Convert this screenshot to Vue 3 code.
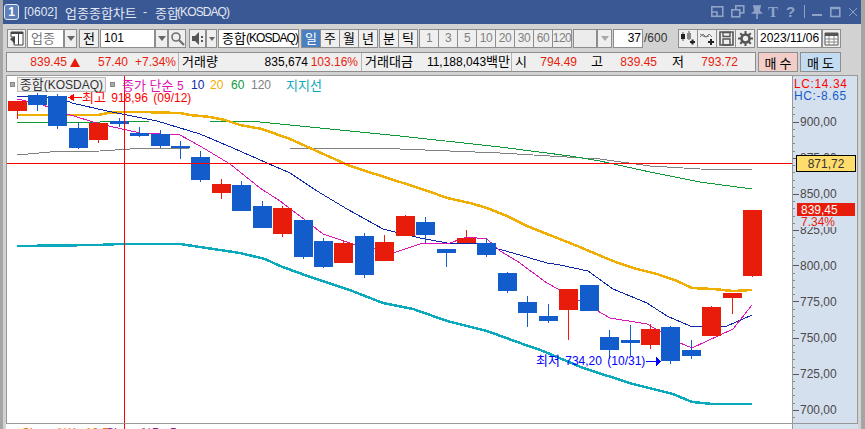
<script setup>
const periods = ['1', '3', '5', '10', '20', '30', '60', '120']
const red = '#e81c0a'
const blue = '#125ccb'
const raw = [
  [8, 100, 110, 100, 118, 1], [28, 94, 104, 92, 110, 0], [48, 95, 125, 93, 128, 0], [69, 127, 147, 122, 148, 0],
  [89, 122, 139, 122, 142, 1], [110, 120, 123, 117, 126, 0], [130, 132, 135, 126, 136, 0], [151, 133, 145, 129, 147, 0],
  [171, 145, 147, 140, 158, 0], [191, 156, 179, 150, 181, 0], [212, 183, 192, 178, 198, 1], [232, 184, 210, 180, 210, 0],
  [253, 205, 227, 200, 227, 0], [273, 207, 233, 205, 236, 1], [294, 219, 256, 219, 258, 0], [314, 240, 266, 237, 267, 0],
  [334, 242, 262, 239, 262, 1], [355, 235, 274, 232, 277, 0], [375, 241, 260, 234, 260, 1], [396, 215, 235, 214, 235, 1],
  [416, 221, 234, 216, 242, 0], [437, 248, 252, 248, 266, 0], [457, 237, 242, 229, 242, 1], [477, 242, 254, 237, 256, 0],
  [498, 272, 290, 271, 292, 0], [518, 301, 312, 295, 326, 0], [539, 315, 320, 303, 322, 0], [559, 288, 309, 288, 339, 1],
  [580, 284, 310, 284, 310, 0], [600, 336, 349, 329, 358, 0], [621, 339, 342, 324, 355, 0], [641, 328, 344, 323, 348, 1],
  [661, 326, 360, 325, 363, 0], [682, 349, 355, 339, 358, 0], [702, 306, 335, 305, 335, 1], [723, 292, 297, 292, 313, 1],
  [743, 209, 275, 209, 276, 1]
]
const candles = raw.map(([x, top, bottom, wt, wb, up]) => ({ x, top, h: bottom - top, wt, wh: wb - wt, wx: x + 9, color: up ? red : blue }))

const lines = [
  { c: '#808080', w: 1, p: '17,154 50,151 100,150 130,148 190,147 290,147 400,148 500,152 600,158 650,165 700,168 752,169' },
  { c: '#0f9a3a', w: 1, p: '17,122 28,121 100,121 150,120 210,120 250,120 290,124 400,135 500,146 570,155 600,160 650,171 700,181 752,188' },
  { c: '#f0ae00', w: 2.5, p: '17,114 98,114 108,112 122,111 140,111 180,112 190,114 210,116 225,119 240,124 262,128 290,138 350,165 428,190 447,197 470,202 487,207 507,215 527,225 547,233 570,242 613,260 633,267 657,273 677,280 692,287 713,288 733,290 752,289' },
  { c: '#0aa9bb', w: 2.5, p: '17,245 98,244 120,243 180,243 200,246 240,252 265,258 280,265 313,277 347,288 383,302 413,308 447,320 487,330 520,342 543,350 583,367 633,383 673,393 692,401 713,403 752,403' },
  { c: '#0c28a8', w: 1, p: '17,95 60,97 72,102 107,110 157,120 200,133 233,147 267,162 290,172 317,190 347,208 383,228 420,237 447,242 480,243 513,252 547,262 560,264 588,270 613,288 647,302 667,315 690,325 727,325 752,314' },
  { c: '#dc14b8', w: 1, p: '17,98 40,103 67,113 100,123 140,132 180,134 200,145 230,163 260,187 280,200 300,215 323,233 353,243 393,252 423,242 447,243 467,236 487,238 500,250 517,260 547,282 580,300 610,317 647,323 680,342 692,347 733,328 752,304' }
]

const runs = (text) => text.split(/([가-힣]+)/).filter(Boolean).map((t) => ({ t, ko: /[가-힣]/.test(t) }))

const infoCells = [
  { t: '839.45', w: 60, cls: 'r red' }, { tri: true, w: 13 }, { t: '57.40', w: 48, cls: 'r red' }, { t: '+7.34%', w: 48, cls: 'r red' },
  { t: '거래량', w: 40, m: 2, cls: 'l div' }, { t: '835,674', w: 90, cls: 'r' }, { t: '103.16%', w: 50, cls: 'r red' },
  { t: '거래대금', w: 54, m: 3, cls: 'l div' }, { t: '11,188,043백만', w: 95, cls: 'r' },
  { t: '시', w: 20, m: 1, cls: 'l div' }, { t: '794.49', w: 46, cls: 'r red' }, { t: '고', w: 26, cls: 'r' }, { t: '839.45', w: 54, cls: 'r red' },
  { t: '저', w: 27, cls: 'r' }, { t: '793.72', w: 54, cls: 'r red' }
].map((c) => ({ ...c, parts: c.t ? runs(c.t) : [] }))

const axisTop = 120.7
const step = 7.23
const ticks = []
for (let i = -5; i <= 41; i++) {
  const y = axisTop + i * step
  if (y > 104 && y < 423) ticks.push({ y: Math.round(y), major: i % 5 === 0 })
}
const labels = ['900,00', '875,00', '850,00', '825,00', '800,00', '775,00', '750,00', '725,00', '700,00'].map((t, i) => ({ t, y: axisTop + i * step * 5 + 4.5 }))
</script>

<template>
  <div class="win">
    <header class="title">
      <span class="badge">1</span>
      <span class="n t-code">[0602]</span>
      <span class="t-name">업종종합차트</span>
      <span class="n t-dash">-</span>
      <span class="t-kind">종합</span>
      <span class="n t-sub">(KOSDAQ)</span>
      <div class="win-icons">
        <svg width="150" height="24" viewBox="711 0 150 24" fill="none" stroke="#8fa3c6" stroke-width="1.6">
          <rect x="711.8" y="6.8" width="11" height="9.5" />
          <path d="M711 12h6v5" />
          <rect x="735.8" y="5.8" width="8" height="7" />
          <rect x="731.8" y="9.8" width="8" height="7" fill="#3a5894" />
          <path d="M753 6h8M754 6l1 5-2 2h8l-2-2 1-5zM757 13v6" fill="#8fa3c6" />
          <text x="768" y="17" class="ti">T</text>
          <text x="786" y="17" class="tq">?</text>
          <path d="M804.5 5v13" stroke-width="1" />
          <path d="M812 15h10" stroke-width="2" />
          <rect x="830.8" y="8" width="9" height="8.5" />
          <path d="M830 8h10" stroke-width="2.4" />
          <path d="M849 8l8 8M857 8l-8 8" stroke-width="1" />
        </svg>
      </div>
    </header>

    <div class="tools">
      <button class="btn w19">
        <svg width="15" height="15" viewBox="0 0 15 15"><path d="M2 1h12v13H5V6H2z" fill="#fff" stroke="#444" /><path d="M2 1h12v2H2zM9 3h1v11H9z" fill="#444" /><path d="M1 8l5-3v8z" fill="#444" /></svg>
      </button>
      <div class="field w37 m1 grey-text">업종</div>
      <button class="btn drop w13"><i class="arrow"></i></button>
      <button class="btn w20 m2">전</button>
      <div class="field w55 m1 n">101</div>
      <button class="btn drop w13"><i class="arrow"></i></button>
      <button class="btn w18">
        <svg width="15" height="15" viewBox="0 0 15 15" fill="none" stroke="#707070" stroke-width="1.6"><circle cx="6" cy="6" r="4" /><path d="M9 9l5 5" stroke-width="2.2" /></svg>
      </button>
      <button class="btn w17 m3">
        <svg width="14" height="13" viewBox="0 0 14 13"><path d="M1 4h3l4-4v13L4 9H1z" fill="#555" /><path d="M10 4h2v2h-2zM10 8h2v2h-2z" fill="#555" /></svg>
      </button>
      <button class="btn drop w11"><i class="arrow small"></i></button>
      <div class="field w81 m1">종합<span class="n sub">(KOSDAQ)</span></div>
      <div class="seg m2">
        <button class="btn cell on">일</button><button class="btn cell">주</button><button class="btn cell">월</button><button class="btn cell">년</button>
      </div>
      <div class="seg m1">
        <button class="btn cell">분</button><button class="btn cell">틱</button>
      </div>
      <div class="seg m1">
        <button v-for="p in periods" :key="p" class="btn cell off n">{{ p }}</button>
      </div>
      <div class="btn w24 m1 blank"></div>
      <button class="btn drop w15"><i class="arrow pale"></i></button>
      <div class="field w30 m1 right n">37</div>
      <span class="total n">/600</span>
      <div class="seg icons">
        <button class="btn cell">
          <svg width="16" height="15" viewBox="0 0 16 15"><path d="M3 1v9M9 0v9" stroke="#555" /><rect x="1" y="3" width="4" height="5" fill="#222" /><rect x="7" y="2" width="4" height="6" fill="#888" /><path d="M10 11h5M12.500 8.500v5" stroke="#222" stroke-width="2" /></svg>
        </button>
        <button class="btn cell">
          <svg width="16" height="15" viewBox="0 0 16 15"><path d="M1 6l3-3 3 3 3-3 3 3M1 3l3 2 3 1 3-1" fill="none" stroke="#777" /><path d="M9 11h6M12 8v6" stroke="#222" stroke-width="2" /></svg>
        </button>
        <button class="btn cell">
          <svg width="15" height="15" viewBox="0 0 15 15"><path d="M1 1h13v13H1z" fill="none" stroke="#555" stroke-width="1.6" /><path d="M4 1.500h7v4H4zM4 8h7v6H4z" fill="none" stroke="#555" stroke-width="1.4" /></svg>
        </button>
        <button class="btn cell">
          <svg width="15" height="15" viewBox="0 0 15 15"><circle cx="7.500" cy="7.500" r="4" fill="none" stroke="#555" stroke-width="2.6" /><path d="M7.500 0v15M0 7.500h15M2.200 2.200l10.600 10.600M12.800 2.200L2.200 12.800" stroke="#555" stroke-width="2" stroke-dasharray="3 9" /></svg>
        </button>
      </div>
      <div class="field w65 m2 date n">2023/11/06</div>
      <button class="btn w19">
        <svg width="15" height="14" viewBox="0 0 15 14"><path d="M1 1h13v12H1z" fill="#fff" stroke="#555" /><path d="M1 1h13v3H1z" fill="#555" /><path d="M1 7h13M1 10h13M5 4v9M10 4v9" stroke="#888" /></svg>
      </button>
    </div>

    <div class="info-row">
      <div class="info">
        <template v-for="(c, i) in infoCells" :key="i">
          <span v-if="c.tri" class="cell-tri" :style="{ width: c.w + 'px' }">
            <svg width="10" height="9" viewBox="0 0 10 9"><path d="M5 0l5 9H0z" fill="#e81c0a" /></svg>
          </span>
          <span v-else class="cell-t" :class="c.cls" :style="{ width: c.w + 'px', marginLeft: (c.m || 0) + 'px' }"><span v-for="(p, j) in c.parts" :key="j" :class="{ n: !p.ko }">{{ p.t }}</span></span>
        </template>
      </div>
      <button class="trade buy">매수</button>
      <button class="trade sell">매도</button>
    </div>

    <div class="chart-frame">
      <div class="chart">
        <svg class="plot" width="785" height="348" viewBox="7 75 785 348" shape-rendering="crispEdges">
          <polyline v-for="l in lines" :key="l.c" :points="l.p" fill="none" :stroke="l.c" :stroke-width="l.w" />
          <g v-for="k in candles" :key="k.x">
            <rect :x="k.wx" :y="k.wt" width="1" :height="k.wh" :fill="k.color" />
            <rect :x="k.x" :y="k.top" width="19" :height="k.h" :fill="k.color" />
          </g>
          <rect x="7" y="162" width="785" height="1" fill="#ff0000" />
          <rect x="124" y="75" width="1" height="348" fill="#ff0000" />
          <rect x="74" y="96" width="8" height="1" fill="#ff0000" />
          <path d="M68 96.500l6-4v8z" fill="#ff0000" />
          <text x="82" y="100.500" class="ann" fill="#f00"><tspan class="ko">최고</tspan> 918,96 (09/12)</text>
          <text x="536" y="363.500" class="ann" fill="#00f"><tspan class="ko">최저</tspan> 734,20 (10/31)</text>
          <rect x="646" y="360" width="10" height="1" fill="#0000ff" />
          <path d="M661 360.500l-5-5v10z" fill="#00f" />
        </svg>
        <div class="legend">
          <i class="sq"></i>
          <span class="name">종합<span class="n">(KOSDAQ)</span></span>
          <i class="sq"></i>
          <span class="lg mag">종가 단순 <span class="n">5</span></span>
          <span class="lg navy n">10</span>
          <span class="lg org n">20</span>
          <span class="lg grn n">60</span>
          <span class="lg gry n">120</span>
          <span class="lg teal">지지선</span>
        </div>
      </div>
      <svg class="axis" width="64" height="348" viewBox="793 75 64 348" shape-rendering="crispEdges">
        <rect v-for="t in ticks" :key="t.y" x="793" :y="t.y" :width="t.major ? 6 : 2" height="1" :fill="t.major ? '#555555' : '#888888'" />
        <text v-for="l in labels" :key="l.t" x="800" :y="l.y" class="ax">{{ l.t }}</text>
        <text x="794" y="87.500" class="ann lc" fill="#f00">LC:14.34</text>
        <text x="794" y="99.500" class="ann lc" fill="#125ccb">HC:-8.65</text>
        <rect x="796" y="154" width="60" height="17" fill="#ffdd6c" />
        <rect x="796.500" y="154.500" width="59" height="16" fill="none" stroke="#000" />
        <text x="826" y="167" class="ax mid">871,72</text>
        <rect x="797" y="202" width="58" height="13" fill="#e81c0a" />
        <text x="801" y="213" class="ax white">839,45</text>
        <rect x="797" y="215" width="40" height="11" fill="#d5e0ef" />
        <text x="801" y="225" class="ann" fill="#e81c0a">7.34%</text>
      </svg>
    </div>

    <div class="strip">
      <span class="s-org n">Slow %K 10,5</span>
      <span class="s-pur n">Slow %D 5</span>
      <i class="cross"></i>
      <i class="stub"></i>
    </div>
  </div>
</template>

<style>
html, body { margin: 0; padding: 0; background: #d2d2d2; }
</style>

<style scoped>
.win {
  width: 865px;
  height: 429px;
  box-sizing: border-box;
  overflow: hidden;
  background: #d2d2d2;
  border-left: 3px solid #a5a5a5;
  border-right: 4px solid #a5a5a5;
  font-family: "Liberation Sans", "Noto Sans CJK KR", sans-serif;
  font-size: 13px;
  color: #000;
  display: flex;
  flex-direction: column;
  position: relative;
}
.n { font-size: 12px; }
.title {
  margin: 0 -4px 0 -3px;
  height: 24px;
  flex: none;
  background: #3a5894;
  color: #e2e8f2;
  display: flex;
  align-items: center;
  position: relative;
  white-space: nowrap;
}
.badge {
  margin-left: 4px;
  width: 13px;
  height: 14px;
  border: 1px solid #e6ebf4;
  border-radius: 3px;
  background: #5f7fb9;
  color: #fff;
  font: bold 12px/14px "Liberation Sans", sans-serif;
  text-align: center;
  flex: none;
}
.t-code { margin-left: 5px; width: 41px; }
.t-name { width: 78px; }
.t-dash { width: 12px; }
.t-kind { width: 24px; }
.t-sub { letter-spacing: -0.9px; margin-left: -2px; }
.sub { letter-spacing: -0.9px; }
.win-icons { position: absolute; left: 711px; top: 0; height: 24px; }
.ti { font: bold 15px "Liberation Serif", serif; fill: #8fa3c6; stroke: none; }
.tq { font: bold 15px "Liberation Sans", sans-serif; fill: #8fa3c6; stroke: none; }

.tools {
  display: flex;
  height: 19px;
  margin: 5px 0 0 4px;
  flex: none;
  align-items: stretch;
}
.btn, .field {
  box-sizing: border-box;
  height: 19px;
  border: 1px solid #8e8e8e;
  padding: 0;
  font: inherit;
  line-height: 17px;
  display: flex;
  align-items: center;
  justify-content: center;
  flex: none;
  color: #000;
}
.btn { background: #efefef; }
.field { background: #fff; justify-content: flex-start; padding-left: 3px; white-space: nowrap; }
.btn.n, .field.n { font-size: 12px; }
.field.right { justify-content: flex-end; padding: 0 1px 0 0; }
.field.date { padding-left: 2px; }
.grey-text { color: #777; }
.w11 { width: 11px; } .w13 { width: 13px; } .w15 { width: 15px; } .w17 { width: 17px; } .w18 { width: 18px; }
.w19 { width: 19px; } .w20 { width: 20px; } .w24 { width: 24px; } .w30 { width: 30px; } .w37 { width: 37px; }
.w55 { width: 55px; } .w65 { width: 65px; } .w81 { width: 81px; }
.m1 { margin-left: 1px; } .m2 { margin-left: 2px; } .m3 { margin-left: 3px; }
.arrow { width: 0; height: 0; border: 4px solid transparent; border-top: 5px solid #666; border-bottom: 0; }
.arrow.small { border-width: 3px; border-top-width: 4px; border-bottom: 0; }
.arrow.pale { border-top-color: #aaa; }
.blank { background: #ececec; }
.seg { display: flex; flex: none; }
.cell { width: 20px; margin-left: -1px; }
.seg .cell:first-child { margin-left: 0; }
.on { background: #4a7fc1; color: #fff; }
.off { color: #808080; letter-spacing: -0.5px; }
.total { width: 26px; margin-left: 1px; line-height: 19px; flex: none; color: #333; }
.icons { margin-left: 8px; }

.info-row {
  display: flex;
  height: 20px;
  margin: 4px 0 0 3px;
  flex: none;
}
.info {
  width: 750px;
  box-sizing: border-box;
  border: 1px solid #8e8e8e;
  background: #efefef;
  display: flex;
  line-height: 18px;
  flex: none;
}
.cell-t { box-sizing: border-box; flex: none; white-space: nowrap; }
.cell-tri { display: flex; align-items: center; justify-content: flex-end; flex: none; }
.r { text-align: right; }
.l { text-align: left; }
.red { color: #e81c0a; }
.div { padding-left: 3px; border-left: 1px solid #b5b5b5; }
.trade {
  box-sizing: border-box;
  height: 20px;
  border: 1px solid #8e8e8e;
  font: inherit;
  letter-spacing: 3px;
  padding: 0 0 0 3px;
  flex: none;
}
.buy { width: 40px; margin-left: 2px; background: #f3cdc7; }
.sell { width: 41px; margin-left: 2px; background: #c4dcf2; }

.chart-frame {
  display: flex;
  margin-top: 3px;
  margin-left: 3px;
  width: 852px;
  height: 349px;
  box-sizing: border-box;
  border: solid #999;
  border-width: 1px 1px 1px 1px;
  flex: none;
}
.chart {
  width: 785px;
  height: 347px;
  overflow: hidden;
  position: relative;
  background: #fff;
  border-right: 1px solid #999;
  flex: none;
}
.plot, .axis { display: block; }
.axis { background: #d5e0ef; flex: none; height: 347px; }
.ann { font-size: 12px; }
.ann .ko { font-size: 13px; }
.ann { word-spacing: 2px; }
.lc { letter-spacing: 0.6px; }
.ax { font-size: 12px; fill: #4a4a4a; }
.ax.mid { text-anchor: middle; fill: #333333; }
.ax.white { fill: #ffffff; }
.legend {
  position: absolute;
  left: 3px;
  top: 1px;
  height: 15px;
  display: flex;
  align-items: center;
  white-space: nowrap;
}
.sq { width: 5px; height: 5px; background: #aaa; border: 1px solid #888; box-sizing: border-box; flex: none; }
.name {
  margin: 0 4px 0 2px;
  width: 89px;
  height: 15px;
  box-sizing: border-box;
  line-height: 13px;
  border: 1px solid #bbb;
  background: #eee;
  color: #333;
  text-align: center;
}
.mag { margin-left: 7px; color: #dc14b8; width: 69px; }
.navy { color: #0c28a8; width: 19px; }
.org { color: #f0ae00; width: 21px; }
.grn { color: #0f9a3a; width: 20px; }
.gry { color: #808080; width: 35px; }
.teal { color: #0aa9bb; }

.strip {
  height: 5px;
  margin-left: 3px;
  width: 852px;
  position: relative;
  background: #fff;
  overflow: hidden;
  flex: none;
  line-height: 15px;
  white-space: pre;
}
.s-org { position: absolute; left: 16px; top: 2px; color: #f07800; word-spacing: 6px; }
.s-pur { position: absolute; left: 100px; top: 2px; color: #80208a; word-spacing: 6px; }
.cross { position: absolute; left: 118px; top: 0; width: 1px; height: 5px; background: #f00; }
.stub { position: absolute; left: 786px; top: 0; width: 66px; height: 5px; background: #d5e0ef; border-left: 1px solid #999; box-sizing: border-box; }
</style>
